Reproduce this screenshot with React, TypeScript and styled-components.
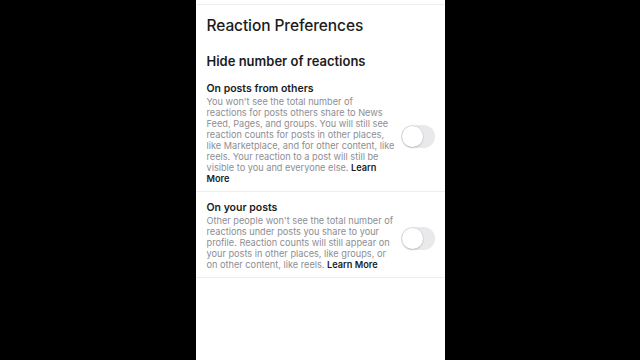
import React from "react";
import styled, { createGlobalStyle } from "styled-components";

const Global = createGlobalStyle`
  html, body { margin: 0; padding: 0; background: #000; }
  body { font-family: Inter, "Noto Sans", sans-serif; -webkit-font-smoothing: antialiased; }
`;

const Stage = styled.div`
  width: 640px;
  height: 360px;
  display: flex;
  justify-content: center;
  background: #000;
`;

const Panel = styled.div`
  width: 249px;
  height: 360px;
  background: #fff;
  display: flex;
  flex-direction: column;
`;

const TopRule = styled.div`
  height: 4px;
  border-bottom: 1px solid #eeeef0;
  margin: 0 1px;
`;

const Title = styled.h1`
  margin: 0;
  padding: 11px 11px 0;
  font-size: 15.5px;
  line-height: 19px;
  font-weight: 500;
  color: #1c1c1e;
  letter-spacing: -0.1px;
`;

const SectionHead = styled.h2`
  margin: 0;
  padding: 18px 11px 0;
  font-size: 13px;
  line-height: 16px;
  font-weight: 600;
  color: #1c1c1e;
`;

const Row = styled.div<{ $pad: number }>`
  display: flex;
  align-items: center;
  gap: 5px;
  padding: ${(p) => p.$pad}px 10px 7px 11px;
  border-bottom: 1px solid #eeeef0;
`;

const RowText = styled.div`
  flex: 1;
  min-width: 0;
`;

const RowTitle = styled.div`
  font-size: 10.5px;
  line-height: 15px;
  font-weight: 600;
  color: #1c1c1e;
`;

const RowDesc = styled.p`
  margin: 0;
  font-size: 9.2px;
  line-height: 11px;
  color: #8e8e93;
`;

const Learn = styled.span`
  color: #1c1c1e;
  font-weight: 600;
`;

const Switch = styled.div`
  width: 34px;
  height: 23px;
  margin-top: 7px;
  border-radius: 12px;
  background: #e9e9eb;
  position: relative;
  flex: none;
`;

const Knob = styled.div`
  position: absolute;
  left: 1px;
  top: 1px;
  width: 21px;
  height: 21px;
  border-radius: 50%;
  background: #fff;
  box-shadow: 0 0 0 0.5px rgba(0, 0, 0, 0.08), 0 1px 2px rgba(0, 0, 0, 0.15);
`;

export default function App() {
  return (
    <>
      <Global />
      <Stage>
        <Panel>
          <TopRule />
          <Title>Reaction Preferences</Title>
          <SectionHead>Hide number of reactions</SectionHead>
          <Row $pad={12}>
            <RowText>
              <RowTitle>On posts from others</RowTitle>
              <RowDesc>
                You won't see the total number of reactions for posts others share to News Feed,
                Pages, and groups. You will still see reaction counts for posts in other places,
                like Marketplace, and for other content, like reels. Your reaction to a post will
                still be visible to you and everyone else. <Learn>Learn More</Learn>
              </RowDesc>
            </RowText>
            <Switch>
              <Knob />
            </Switch>
          </Row>
          <Row $pad={8}>
            <RowText>
              <RowTitle>On your posts</RowTitle>
              <RowDesc>
                Other people won't see the total number of reactions under posts you share to your
                profile. Reaction counts will still appear on your posts in other places, like
                groups, or on other content, like reels. <Learn>Learn More</Learn>
              </RowDesc>
            </RowText>
            <Switch>
              <Knob />
            </Switch>
          </Row>
        </Panel>
      </Stage>
    </>
  );
}
